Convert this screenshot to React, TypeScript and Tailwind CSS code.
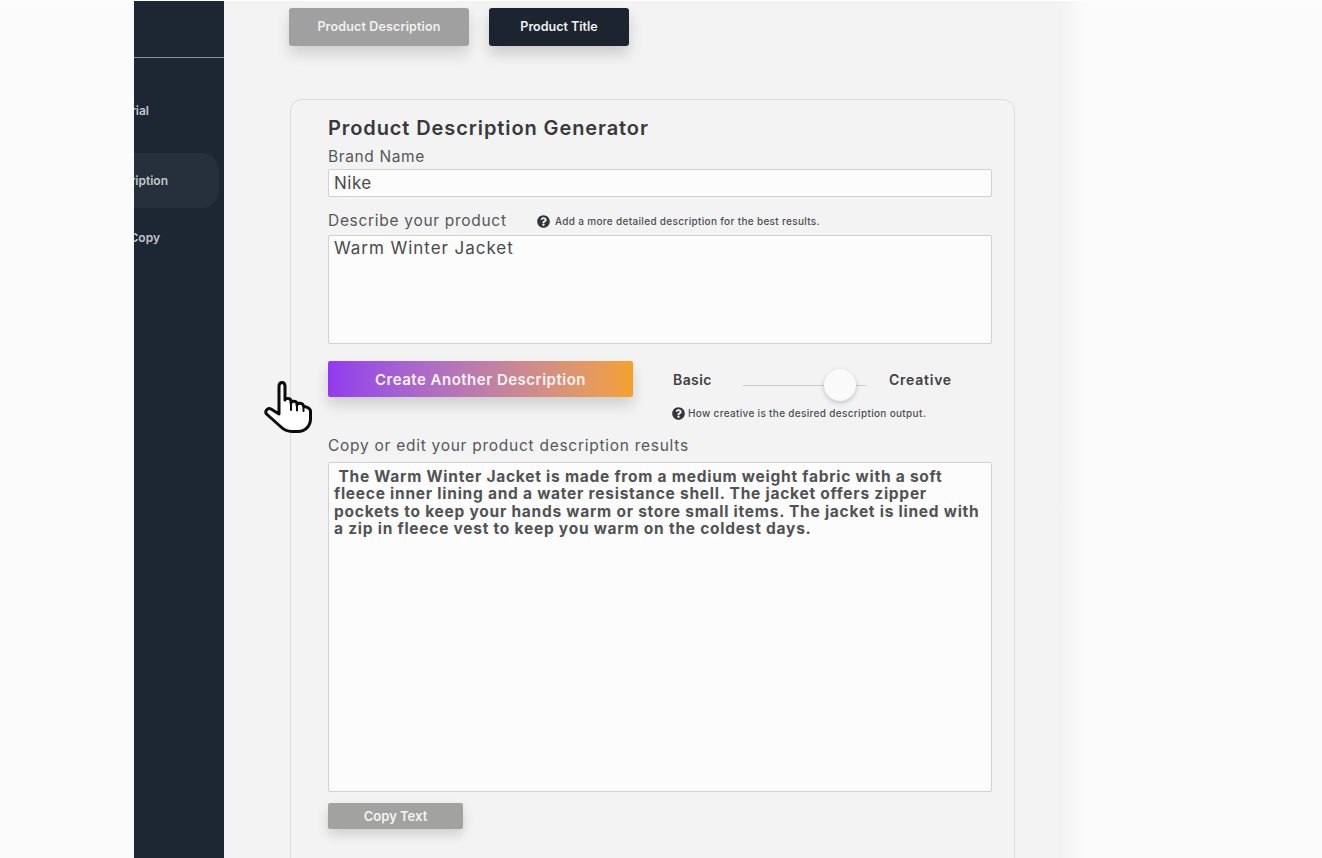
import React from "react";
import { FaQuestionCircle } from "react-icons/fa";

const body = "[font-family:Inter,'Noto_Sans',sans-serif]";

const results =
  " The Warm Winter Jacket is made from a medium weight fabric with a soft\nfleece inner lining and a water resistance shell. The jacket offers zipper\npockets to keep your hands warm or store small items. The jacket is lined with\na zip in fleece vest to keep you warm on the coldest days.";

function SideItem({ label, active, className }: { label: string; active?: boolean; className: string }) {
  return (
    <div
      className={`flex w-[85px] items-center justify-end overflow-hidden whitespace-nowrap text-[12px] font-semibold text-[#c3c7cb] ${
        active ? "h-[55px] rounded-r-[18px] bg-[#25303c]" : "h-[20px]"
      } ${className}`}
    >
      {label}
    </div>
  );
}

function HandCursor() {
  return (
    <svg
      viewBox="0 0 48 52"
      className="absolute left-[264px] top-[381px] h-[52px] w-[48px]"
      fill="#fff"
      stroke="#0b0b0b"
      strokeWidth="3"
      strokeLinecap="round"
      strokeLinejoin="round"
    >
      <path d="M15 33 V5.5 C15 2.5 16.4 1.5 18 1.5 C19.8 1.5 21 2.8 21 5.5 V19 C21 16.8 26.5 16.8 27 19.5 V22 C27 19.5 32.5 19.5 33 22.5 V24 C33.5 21.5 39 21.5 39.5 25 C40.5 26 46 25.8 46.5 30 V38 C46.5 45 41 50.5 34 50.5 H28 C23 50.5 20 49 16.5 45.5 L2.5 33 C0.5 30.5 3.5 26 7 28 Z" />
      <path d="M27 22 V29 M33 24 V29.5 M39.5 25 V30" fill="none" strokeWidth="2" />
    </svg>
  );
}

function Hint({ text, className, gap }: { text: string; className: string; gap: string }) {
  return (
    <div className={`flex items-center text-[#4b4f52] ${className}`}>
      <FaQuestionCircle className="text-[#33373a]" size={13} />
      <span className={`text-[10px] font-medium tracking-[0.32px] whitespace-nowrap ${gap}`}>{text}</span>
    </div>
  );
}

export default function App() {
  return (
    <div className={`relative flex h-[858px] w-[1322px] overflow-hidden bg-white pt-[1px] ${body}`}>
      <div className="w-[134px] shrink-0 bg-[#fbfbfb]" />

      <aside className="flex w-[90px] shrink-0 flex-col bg-[#1c2733]">
        <div className="h-[57px] border-b border-[#8c949b]" />
        <SideItem label="Tutorial" className="mt-[43px] pr-[70px]" />
        <SideItem label="Product Description" active className="mt-[32px] pr-[51px]" />
        <SideItem label="Ad Copy" className="mt-[20px] pr-[59px]" />
      </aside>

      <main className="flex w-[836px] shrink-0 flex-col bg-[#f3f3f3] pl-[65px]">
        <div className="mt-[7px] flex gap-[20px]">
          <button className="h-[38px] w-[180px] rounded-[3px] bg-[#a0a0a0] pt-[1px] text-[12.5px] font-semibold tracking-[0.15px] text-[#f1f1f1] shadow-[0_8px_14px_rgba(0,0,0,0.14)]">
            Product Description
          </button>
          <button className="h-[38px] w-[140px] rounded-[3px] bg-[#1c2430] pt-[1px] text-[12.5px] font-semibold text-[#f1f1f1] shadow-[0_8px_14px_rgba(0,0,0,0.16)]">
            Product Title
          </button>
        </div>

        <section className="mt-[53px] ml-[1px] h-[820px] w-[725px] shrink-0 rounded-[12px] border border-[#dcdcdc] pr-[23px] pl-[37px] text-[#55585a]">
          <h1 className="mt-[14px] text-[20px] leading-[28px] font-semibold tracking-[0.9px] text-[#38393b]">
            Product Description Generator
          </h1>
          <label className="mt-[5px] block text-[15.5px] leading-[20px] tracking-[0.62px]">Brand Name</label>
          <input
            readOnly
            value="Nike"
            className="mt-[2px] block h-[28px] w-[664px] rounded-[2px] border border-[#d2d2d2] bg-[#fcfcfc] px-[5px] text-[17px] tracking-[0.5px] text-[#4a4a4a] outline-none"
          />

          <div className="mt-[14px] flex h-[20px] items-center">
            <label className="w-[209px] text-[15.5px] leading-[20px] tracking-[0.7px]">Describe your product</label>
            <Hint text="Add a more detailed description for the best results." className="" gap="ml-[5px]" />
          </div>
          <textarea
            readOnly
            value="Warm Winter Jacket"
            className="mt-[4px] block h-[109px] w-[664px] resize-none rounded-[2px] border border-[#d2d2d2] bg-[#fcfcfc] px-[5px] py-0 text-[17px] leading-[24px] tracking-[0.95px] text-[#4a4a4a] outline-none"
          />

          <div className="mt-[17px] flex">
            <button className="h-[36px] w-[305px] rounded-[2px] bg-linear-to-r from-[#9338f0] to-[#f5a128] pt-[2px] text-[15px] font-semibold tracking-[0.5px] text-[#f8f3f6] shadow-[0_8px_14px_rgba(0,0,0,0.15)]">
              Create Another Description
            </button>
            <div className="ml-[39px] w-[290px]">
              <div className="flex h-[36px] items-center text-[14px] font-semibold tracking-[0.4px] text-[#3f4143]">
                <span className="w-[71px] pl-[1px]">Basic</span>
                <div className="relative h-[1px] w-[123px] translate-y-[6px] bg-[#c9c9c9]">
                  <div className="absolute top-[-16px] left-[81px] h-[32px] w-[32px] rounded-full bg-[#fafafa] shadow-[0_2px_5px_rgba(0,0,0,0.2)]" />
                </div>
                <span className="ml-[23px] tracking-[0.75px]">Creative</span>
              </div>
              <Hint text="How creative is the desired description output." className="mt-[9px]" gap="ml-[3px]" />
            </div>
          </div>

          <label className="mt-[15px] block text-[15.5px] leading-[20px] tracking-[0.73px]">
            Copy or edit your product description results
          </label>
          <textarea
            readOnly
            wrap="off"
            value={results}
            className="mt-[6px] block h-[330px] w-[664px] resize-none overflow-hidden rounded-[2px] border border-[#d2d2d2] bg-[#fcfcfc] px-[5px] py-[5px] text-[15.5px] leading-[17.4px] font-bold tracking-[0.75px] text-[#505254] outline-none"
          />

          <button className="mt-[11px] h-[26px] w-[135px] rounded-[2px] bg-[#a2a2a0] pt-[1px] text-[13px] font-semibold text-[#f4f4f4] shadow-[0_6px_12px_rgba(0,0,0,0.14)]">
            Copy Text
          </button>
        </section>
      </main>

      <div className="w-[25px] shrink-0 bg-linear-to-r from-[#f3f3f3] to-[#fbfbfb]" />
      <div className="flex-1 bg-[#fbfbfb]" />

      <HandCursor />
    </div>
  );
}
